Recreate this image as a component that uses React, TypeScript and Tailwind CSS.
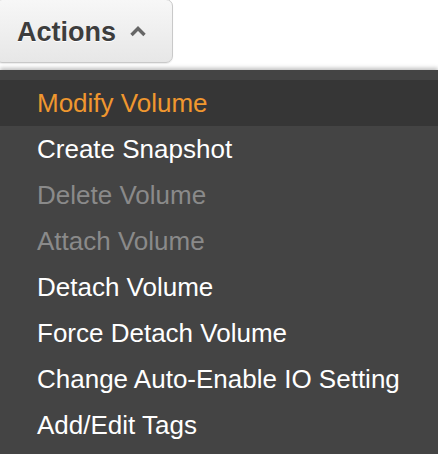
import React from "react";

const items: { label: string; state: "hover" | "normal" | "disabled" }[] = [
  { label: "Modify Volume", state: "hover" },
  { label: "Create Snapshot", state: "normal" },
  { label: "Delete Volume", state: "disabled" },
  { label: "Attach Volume", state: "disabled" },
  { label: "Detach Volume", state: "normal" },
  { label: "Force Detach Volume", state: "normal" },
  { label: "Change Auto-Enable IO Setting", state: "normal" },
  { label: "Add/Edit Tags", state: "normal" },
];

export default function App() {
  return (
    <div
      className="w-[438px] h-[454px] overflow-hidden bg-white"
      style={{ fontFamily: '"Liberation Sans", Arial, sans-serif' }}
    >
      <div className="flex h-[63px] items-start">
        <button className="ml-[-5px] mt-[-1px] flex h-[64px] w-[178px] items-center gap-[13px] rounded-[7px] border border-[#c9c9c9] bg-gradient-to-b from-[#f7f7f7] to-[#e7e7e7] pl-[21px] pt-[3px] shadow-[0_1px_1px_rgba(0,0,0,0.08)]">
          <span className="text-[27px] font-bold text-[#3d3d3d] [text-shadow:0_1px_0_#ffffff]">
            Actions
          </span>
          <svg width="18" height="12" viewBox="0 0 18 12" className="mt-[-4px]">
            <path
              d="M2.5 10 L9 3.5 L15.5 10"
              fill="none"
              stroke="#666666"
              strokeWidth="3.4"
            />
          </svg>
        </button>
      </div>
      <div className="mt-[7px] h-[400px] bg-[#444444] pt-[10px] shadow-[0_-2px_4px_rgba(0,0,0,0.25)]">
        {items.map((it) => (
          <div
            key={it.label}
            className={
              "h-[46px] pl-[37px] text-[26px] leading-[46px] whitespace-nowrap " +
              (it.state === "hover"
                ? "bg-[#363636] text-[#f0972f]"
                : it.state === "disabled"
                ? "text-[#8a8a8a]"
                : "text-white")
            }
          >
            {it.label}
          </div>
        ))}
      </div>
    </div>
  );
}
